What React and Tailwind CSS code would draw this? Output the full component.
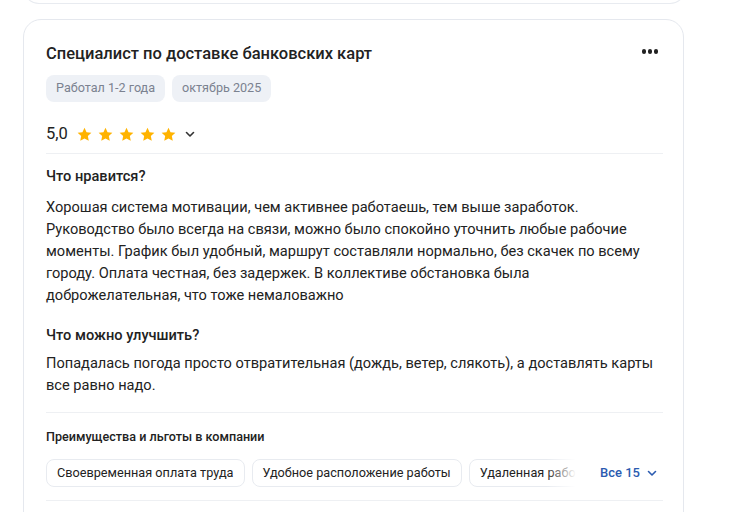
import React from "react";

const Star = () => (
  <svg width="17" height="17" viewBox="0 0 24 24" className="shrink-0">
    <path
      d="M12 2.5l2.9 6.2 6.8.8-5 4.7 1.3 6.7L12 17.6l-6 3.3 1.3-6.7-5-4.7 6.8-.8z"
      fill="#ffb300"
    />
  </svg>
);

const Chevron = ({ className = "", color = "#333" }) => (
  <svg width="12" height="12" viewBox="0 0 12 12" className={className}>
    <path d="M2.5 4.5L6 8l3.5-3.5" fill="none" stroke={color} strokeWidth="1.6" strokeLinecap="round" strokeLinejoin="round" />
  </svg>
);

export default function App() {
  const chips = [
    "Своевременная оплата труда",
    "Удобное расположение работы",
    "Удаленная работа",
  ];
  return (
    <div
      className="w-[740px] h-[512px] overflow-hidden bg-white text-[#222]"
      style={{ fontFamily: "Roboto, 'Noto Sans', sans-serif" }}
    >
      <div className="ml-[23px] w-[661px] h-[3px] -mt-[12px] pt-[12px] box-content border border-t-0 border-[#e8ebf0] rounded-b-[16px]" />
      <div className="ml-[23px] mt-[15px] w-[661px] h-[600px] border border-[#e5e8ee] rounded-[18px] px-[22px] pt-[22px]">
        <div className="flex items-start justify-between">
          <div className="text-[16.5px] leading-[24px] font-medium text-[#222]">
            Специалист по доставке банковских карт
          </div>
          <div className="flex gap-[1.5px] mt-[7px] mr-[3px]">
            <span className="w-[4.5px] h-[4.5px] rounded-full bg-[#222]" />
            <span className="w-[4.5px] h-[4.5px] rounded-full bg-[#222]" />
            <span className="w-[4.5px] h-[4.5px] rounded-full bg-[#222]" />
          </div>
        </div>
        <div className="flex gap-[7px] mt-[9px]">
          <span className="h-[27px] px-[10px] flex items-center rounded-[8px] bg-[#eef1f6] text-[12.6px] text-[#7b8290]">
            Работал 1-2 года
          </span>
          <span className="h-[27px] px-[10px] flex items-center rounded-[8px] bg-[#eef1f6] text-[12.6px] text-[#7b8290]">
            октябрь 2025
          </span>
        </div>
        <div className="flex items-center mt-[20px] h-[24px]">
          <span className="text-[16.5px] text-[#222] mr-[8px]">5,0</span>
          <div className="flex gap-[4px]">
            <Star />
            <Star />
            <Star />
            <Star />
            <Star />
          </div>
          <Chevron className="ml-[7px]" />
        </div>
        <div className="mt-[7px] h-px bg-[#eef0f3] mr-[-2px]" />
        <div className="mt-[12px] text-[14.6px] leading-[20px] font-medium">Что нравится?</div>
        <p className="mt-[10px] text-[14.6px] leading-[22px] text-[#222]">
          Хорошая система мотивации, чем активнее работаешь, тем выше заработок.
          <br />
          Руководство было всегда на связи, можно было спокойно уточнить любые рабочие
          моменты. График был удобный, маршрут составляли нормально, без скачек по всему
          городу. Оплата честная, без задержек. В коллективе обстановка была
          доброжелательная, что тоже немаловажно
        </p>
        <div className="mt-[19px] text-[14.6px] leading-[20px] font-medium">Что можно улучшить?</div>
        <p className="mt-[7px] text-[14.6px] leading-[22px] text-[#222]">
          Попадалась погода просто отвратительная (дождь, ветер, слякоть), а доставлять карты
          все равно надо.
        </p>
        <div className="mt-[16px] h-px bg-[#eef0f3] mr-[-2px]" />
        <div className="mt-[15px] text-[12.6px] leading-[18px] font-medium">
          Преимущества и льготы в компании
        </div>
        <div className="mt-[13px] flex items-center">
          <div className="relative w-[530px] overflow-hidden">
            <div className="flex gap-[7px] w-max">
              {chips.map((c) => (
                <span
                  key={c}
                  className="h-[28px] px-[10px] flex items-center rounded-[8px] border border-[#e8ebf0] text-[12.7px] text-[#222] whitespace-nowrap"
                >
                  {c}
                </span>
              ))}
            </div>
            <div className="absolute right-0 top-0 h-full w-[30px] bg-gradient-to-r from-transparent to-white" />
          </div>
          <div className="ml-[24px] flex items-center gap-[6px] text-[13px] font-medium text-[#2b5bb0]">
            Все 15
            <Chevron color="#2b5bb0" />
          </div>
        </div>
        <div className="mt-[13px] h-px bg-[#eef0f3] mr-[-2px]" />
      </div>
    </div>
  );
}
